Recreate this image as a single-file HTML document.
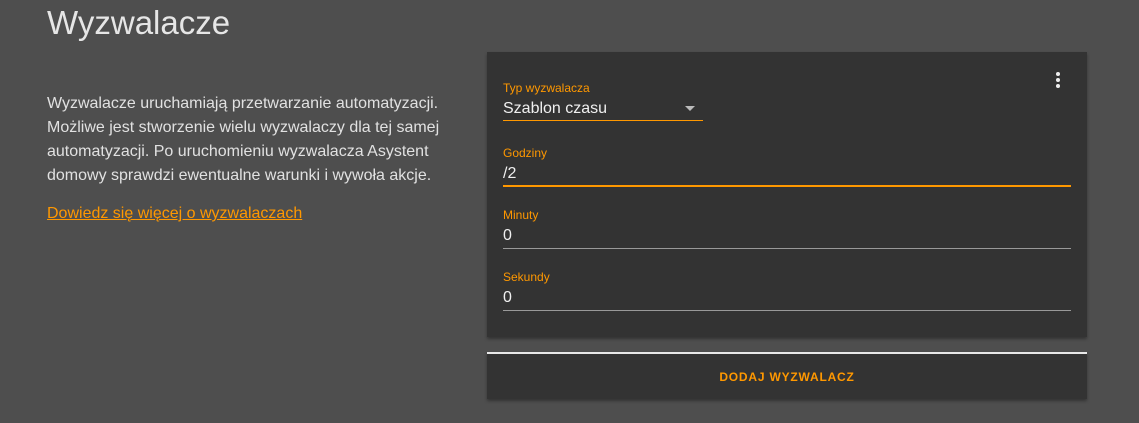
<!DOCTYPE html>
<html><head><meta charset="utf-8"><style>
body{margin:0;width:1139px;height:423px;background:#4e4e4e;font-family:"Liberation Sans",sans-serif;position:relative;overflow:hidden;color:#e1e1e1}
.a{position:absolute;white-space:nowrap}
h1{position:absolute;left:47px;top:4px;margin:0;font-weight:400;font-size:33px;color:#e6e6e6}
.p{left:47px;top:92px;font-size:16px;line-height:24px;white-space:normal;width:410px;color:#e1e1e1}
.lnk{left:47px;top:205px;font-size:16px;color:#ff9800;text-decoration:underline}
.card{position:absolute;left:487px;top:52px;width:600px;height:285px;background:#333;box-shadow:0 2px 3px rgba(0,0,0,.35)}
.card2{position:absolute;left:487px;top:352px;width:600px;height:47px;background:#333;border-top:2px solid #e8e8e8;box-sizing:border-box;box-shadow:0 2px 3px rgba(0,0,0,.35);text-align:center;color:#ff9800;font-size:12px;font-weight:700;letter-spacing:0.8px;line-height:46px}
.lb{font-size:12px;color:#ff9800}
.v{font-size:16px;color:#f0f0f0}
.u{position:absolute;height:1px;background:#999}
</style></head><body>
<h1>Wyzwalacze</h1>
<div class="a p">Wyzwalacze uruchamiają przetwarzanie automatyzacji. Możliwe jest stworzenie wielu wyzwalaczy dla tej samej automatyzacji. Po uruchomieniu wyzwalacza Asystent domowy sprawdzi ewentualne warunki i wywoła akcje.</div>
<div class="a lnk">Dowiedz się więcej o wyzwalaczach</div>
<div class="card">
<div class="a lb" style="left:16px;top:29px">Typ wyzwalacza</div>
<div class="a v" style="left:16px;top:48px">Szablon czasu</div>
<div class="a" style="left:198px;top:54px;width:0;height:0;border-left:5px solid transparent;border-right:5px solid transparent;border-top:5px solid #bbb"></div>
<div class="u" style="left:16px;top:68px;width:200px;background:#ff9800"></div>
<div class="a" style="left:569px;top:20px;width:4px">
<div style="width:4px;height:4px;border-radius:2px;background:#eee;margin-bottom:2px"></div>
<div style="width:4px;height:4px;border-radius:2px;background:#eee;margin-bottom:2px"></div>
<div style="width:4px;height:4px;border-radius:2px;background:#eee"></div></div>
<div class="a lb" style="left:16px;top:94px">Godziny</div>
<div class="a v" style="left:16px;top:113px">/2</div>
<div class="u" style="left:16px;top:133px;width:568px;height:2px;background:#ff9800"></div>
<div class="a lb" style="left:16px;top:156px">Minuty</div>
<div class="a v" style="left:16px;top:175px">0</div>
<div class="u" style="left:16px;top:196px;width:568px"></div>
<div class="a lb" style="left:16px;top:218px">Sekundy</div>
<div class="a v" style="left:16px;top:237px">0</div>
<div class="u" style="left:16px;top:258px;width:568px"></div>
</div>
<div class="card2">DODAJ WYZWALACZ</div>
</body></html>
